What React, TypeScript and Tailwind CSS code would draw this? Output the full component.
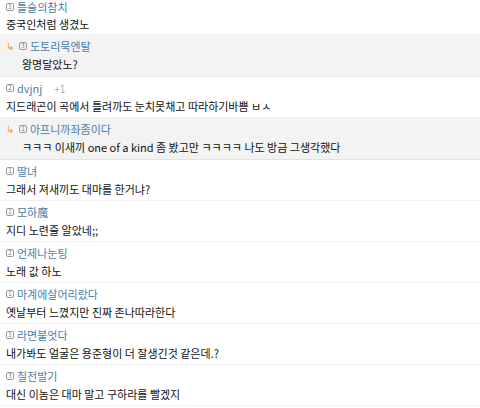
import React from 'react';

type Comment = {
  level: number;
  name: string;
  text: string;
  reply?: boolean;
  plus?: string;
};

const comments: Comment[] = [
  { level: 1, name: '틀술의참치', text: '중국인처럼 생겼노' },
  { level: 3, name: '도토리묵엔탈', text: '왕명달았노?', reply: true },
  { level: 2, name: 'dvjnj', text: '지드래곤이 곡에서 틀려까도 눈치못채고 따라하기바쁨 ㅂㅅ', plus: '+1' },
  { level: 1, name: '아프니까좌좀이다', text: 'ㅋㅋㅋ 이새끼 one of a kind 좀 봤고만 ㅋㅋㅋㅋ 나도 방금 그생각했다', reply: true },
  { level: 1, name: '딸녀', text: '그래서 져새끼도 대마를 한거냐?' },
  { level: 1, name: '모하魔', text: '지디 노련줄 알았네;;' },
  { level: 2, name: '언제나눈팅', text: '노래 값 하노' },
  { level: 1, name: '마계에살어리랐다', text: '옛날부터 느꼈지만 진짜 존나따라한다' },
  { level: 1, name: '라면불엇다', text: '내가봐도 얼굴은 용준형이 더 잘생긴것 같은데.?' },
  { level: 3, name: '칠전발기', text: '대신 이놈은 대마 말고 구하라를 빨겠지' },
];

const LevelIcon: React.FC<{ level: number }> = ({ level }) => (
  <span className="inline-flex items-center justify-center w-[8px] h-[8px] rounded-[2px] border border-[#9a9a9a] text-[6px] leading-none text-[#777] mr-[3px]">
    {level}
  </span>
);

export default function App() {
  return (
    <div
      className="w-[480px] h-[408px] overflow-hidden bg-white"
      style={{ fontFamily: '"Noto Sans CJK KR", "Noto Sans", sans-serif' }}
    >
      {comments.map((c, i) => (
        <div
          key={i}
          className={
            c.reply
              ? 'bg-[#f3f3f3] border-b border-[#e3e3e3] pt-[4px] pb-[5px] pl-[6px]'
              : i === 0
                ? 'bg-white border-b border-[#f1f1f1] pt-[1px] pb-[3px] pl-[6px]'
                : 'bg-white border-b border-[#f1f1f1] pt-[4px] pb-[4px] pl-[6px]'
          }
        >
          <div className={i === 0 ? 'flex items-center h-[12px] text-[11px]' : 'flex items-center h-[14px] text-[11px]'}>
            {c.reply && <span className="text-[#f0a030] text-[10px] mr-[5px] leading-none">↳</span>}
            <LevelIcon level={c.level} />
            <span className="text-[#4a7ea8] leading-[12px]">{c.name}</span>
            {c.plus && <span className="ml-[12px] text-[#aaa] text-[10px]">{c.plus}</span>}
          </div>
          <div
            className={
              c.reply
                ? 'mt-[4px] h-[14px] text-[11px] leading-[14px] text-[#111] pl-[16px]'
                : 'mt-[4px] h-[14px] text-[11px] leading-[14px] text-[#111]'
            }
          >
            {c.text}
          </div>
        </div>
      ))}
    </div>
  );
}
